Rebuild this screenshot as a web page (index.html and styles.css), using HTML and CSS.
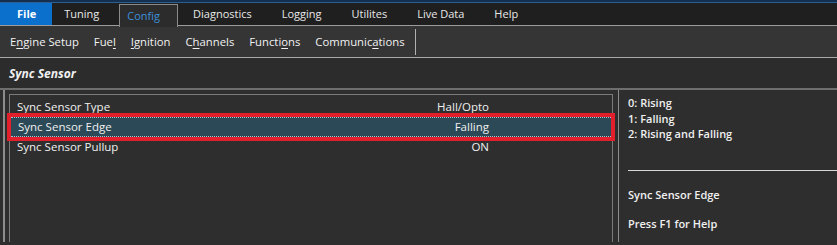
FILE: index.html
```html
<!DOCTYPE html>
<html>
<head>
<meta charset="utf-8">
<link rel="stylesheet" href="styles.css">
</head>
<body>
<div class="topstrip"></div>
<div class="tabs">
  <div class="tab file">File</div>
  <div class="tab tuning">Tuning</div>
  <div class="tab active">Config</div>
  <div class="tab">Diagnostics</div>
  <div class="tab">Logging</div>
  <div class="tab">Utilites</div>
  <div class="tab">Live Data</div>
  <div class="tab">Help</div>
</div>
<div class="toolbar">
  <span class="tool">E<u>n</u>gine Setup</span>
  <span class="tool">Fue<u>l</u></span>
  <span class="tool"><u>I</u>gnition</span>
  <span class="tool">C<u>h</u>annels</span>
  <span class="tool">Functi<u>o</u>ns</span>
  <span class="tool">Communic<u>a</u>tions</span>
  <span class="sep"></span>
</div>
<div class="header">Sync Sensor</div>
<div class="content">
  <div class="group">
    <div class="list">
      <div class="row"><span class="label">Sync Sensor Type</span><span class="value">Hall/Opto</span></div>
      <div class="row selected"><span class="label">Sync Sensor Edge</span><span class="value">Falling</span></div>
      <div class="row"><span class="label">Sync Sensor Pullup</span><span class="value">ON</span></div>
    </div>
  </div>
  <div class="help">
    <div class="options">
      <div>0: Rising</div>
      <div>1: Falling</div>
      <div>2: Rising and Falling</div>
    </div>
    <div class="rule"></div>
    <div class="help-title">Sync Sensor Edge</div>
    <div class="help-f1">Press F1 for Help</div>
  </div>
</div>
</body>
</html>
```
FILE: styles.css
```css
html, body {
  margin: 0;
  padding: 0;
}
body {
  width: 837px;
  height: 245px;
  overflow: hidden;
  background: #2e2e2e;
  color: #f0f0f0;
  font-family: "Open Sans", "Noto Sans", sans-serif;
  font-size: 11.5px;
}
.topstrip {
  height: 2px;
  background: #15304f;
  border-bottom: 1px solid #2b5f94;
}
.tabs {
  display: flex;
  height: 22px;
  background: #1f1f1f;
  border-bottom: 1px solid #9c9c9c;
}
.tab {
  padding: 0 15px;
  line-height: 22px;
  color: #e8e8e8;
  font-size: 11px;
}
.tab.file {
  background: #0b6fcc;
  color: #fff;
  font-weight: 700;
  padding: 0 16px 0 17px;
}
.tab.tuning {
  padding: 0 14px 0 12px;
}
.tab.active {
  color: #3c8fd9;
  background: #2c2c2c;
  border: 1px solid #8a8a8a;
  border-bottom: none;
  margin: 1px 0 -1px 6px;
  padding: 0 17px 0 7px;
  line-height: 21px;
  height: 22px;
}
.toolbar {
  display: flex;
  align-items: center;
  height: 31px;
  background: #353535;
  border-bottom: 1px solid #a8a8a8;
  padding-left: 10px;
  gap: 15px;
}
.tool {
  font-size: 11.3px;
  color: #f2f2f2;
}
.tool u {
  text-underline-offset: 2px;
}
.sep {
  width: 1px;
  height: 26px;
  background: #b0b0b0;
  margin-left: -5px;
}
.header {
  height: 30px;
  line-height: 32px;
  padding-left: 9px;
  font-weight: 700;
  font-style: italic;
  font-size: 12px;
  background: #2c2c2c;
  border-bottom: 2px solid #6e6e6e;
}
.content {
  display: flex;
  height: 152px;
}
.group {
  width: 604px;
  margin-left: 3px;
  border-left: 2px solid #8c8c8c;
  border-right: 1px solid #8c8c8c;
  padding: 4px 5px 0 4px;
}
.list {
  border: 1px solid #7a7a7a;
  border-bottom: none;
  height: 100%;
  padding-top: 2px;
  box-sizing: border-box;
}
.row {
  display: grid;
  grid-template-columns: 1fr auto;
  height: 19.5px;
  line-height: 19px;
  padding: 0 123px 0 7px;
}
.row.selected {
  background: #2b4957;
  outline: 4px solid #e21f2a;
  outline-offset: 0;
  border-top: 1px dotted #a8c4d0;
  border-bottom: 1px dotted #a8c4d0;
  height: 18px;
  line-height: 17px;
  margin: 0 1px;
  padding-right: 122px;
  position: relative;
  z-index: 1;
}
.value {
  text-align: right;
}
.help {
  flex: 1;
  padding: 5px 0 0 9px;
  font-weight: 600;
  font-size: 11px;
}
.options div {
  line-height: 15.5px;
}
.rule {
  height: 1px;
  background: #d8d8d8;
  margin-top: 28px;
}
.help-title {
  margin-top: 16px;
}
.help-f1 {
  margin-top: 14px;
}
```
